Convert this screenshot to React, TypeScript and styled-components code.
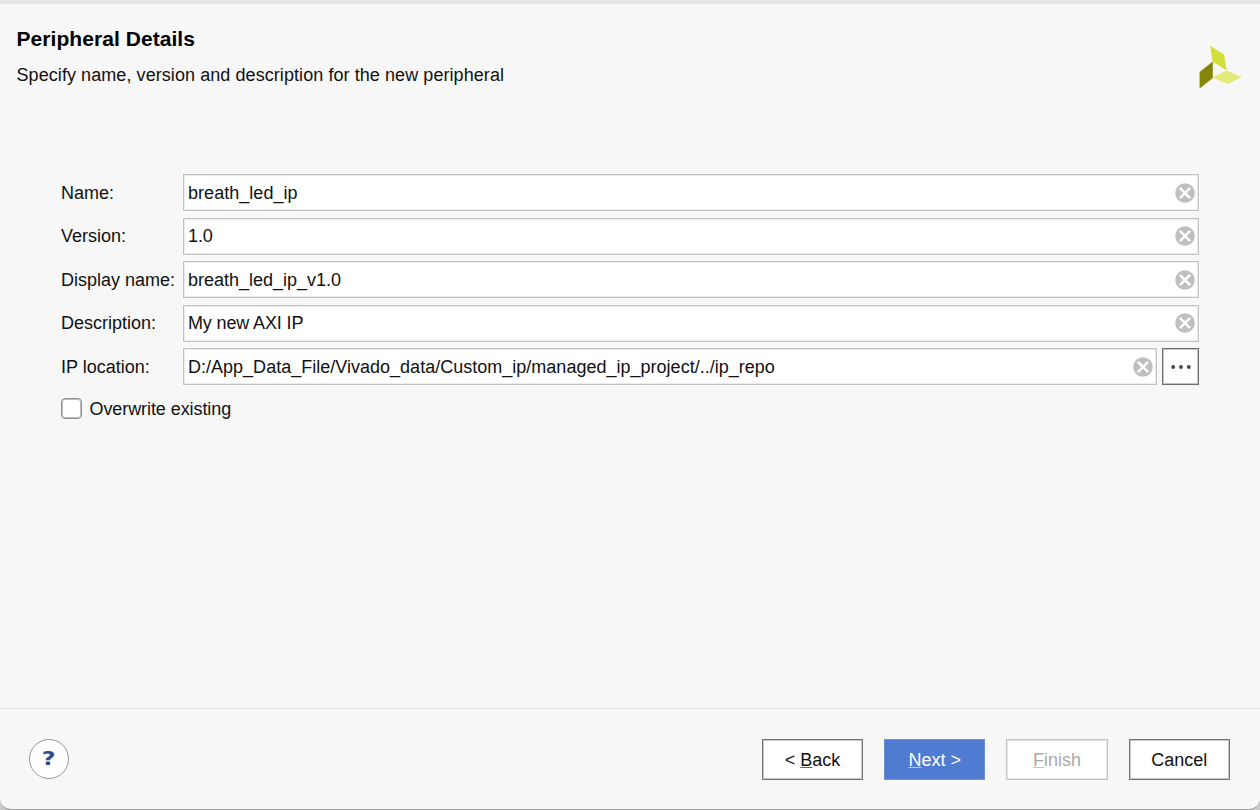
import React from "react";
import styled, { createGlobalStyle } from "styled-components";

const GlobalStyle = createGlobalStyle`
  *, *::before, *::after { box-sizing: border-box; }
  body { margin: 0; background: #c9c9c9; font-family: "Liberation Sans", Arial, sans-serif; color: #111; }
`;

const Dialog = styled.main`
  width: 1260px;
  height: 810px;
  display: flex;
  flex-direction: column;
  overflow: hidden;
  background: #f7f7f7;
  border-top: 4px solid #e6e6e6;
  border-bottom: 1px solid #a3a3a3;
  border-radius: 0 0 11px 11px;
`;

const Header = styled.header`
  height: 170px;
  display: flex;
  justify-content: space-between;
  align-items: flex-start;
  padding: 22px 17px 0 16.5px;
`;

const Title = styled.h1`
  margin: 0;
  font-size: 21px;
  line-height: 26px;
  letter-spacing: 0.06px;
  color: #000;
`;

const Subtitle = styled.p`
  margin: 12px 0 0;
  font-size: 18px;
  line-height: 22px;
  letter-spacing: 0.072px;
`;

const Logo = styled.svg`
  width: 44px;
  height: 44px;
  margin-top: 19px;
`;

const Form = styled.form`
  flex: 1;
  display: flex;
  flex-direction: column;
  gap: 6.5px;
  padding: 0 61px;
`;

const Row = styled.div`
  height: 37px;
  display: flex;
  align-items: center;
`;

const Label = styled.label`
  width: 122px;
  flex: none;
  font-size: 18px;
  line-height: 22px;
  white-space: nowrap;
`;

const Field = styled.div`
  flex: 1;
  height: 37px;
  display: flex;
  align-items: center;
  justify-content: space-between;
  padding: 0 3px 0 4px;
  background: #fff;
  border: 1px solid #c0c0c0;
  box-shadow: inset 0 0 0 1px #ececec, 0 0 0 1px #fcfcfc;
`;

const Value = styled.span<{ $tracking?: number }>`
  font-size: 18px;
  line-height: 22px;
  letter-spacing: ${(p) => p.$tracking ?? 0}px;
  white-space: nowrap;
`;

const ClearIcon = styled.svg`
  width: 20px;
  height: 20px;
  flex: none;
`;

const Browse = styled.button`
  width: 37px;
  height: 37px;
  margin-left: 5px;
  padding: 0;
  display: grid;
  place-items: center;
  background: #fff;
  border: 1px solid #6e6e6e;
  box-shadow: inset 0 0 0 1px #c4c4c4;
`;

const CheckRow = styled.label`
  display: flex;
  align-items: center;
  height: 22px;
  margin-top: 6px;
  gap: 7.5px;
  font-size: 18px;
  line-height: 22px;
  letter-spacing: -0.08px;
`;

const CheckBox = styled.input`
  appearance: none;
  width: 21px;
  height: 21px;
  margin: 0;
  background: #fff;
  border: 1px solid #929292;
  border-radius: 4px;
  box-shadow: inset 0 0 0 1px #bdbdbd;
`;

const Footer = styled.footer`
  height: 101px;
  display: flex;
  align-items: center;
  justify-content: space-between;
  padding: 0 30px 0 29px;
  border-top: 1px solid #e2e2e2;
`;

const Help = styled.button`
  width: 40px;
  height: 40px;
  padding: 0;
  border: 1px solid #969696;
  border-radius: 50%;
  background: #fff;
  color: #2f4d8c;
  font: bold 19.5px/38px "DejaVu Sans", sans-serif;
`;

const HelpMark = styled.span`
  display: inline-block;
  transform: scaleX(1.22);
`;

const Actions = styled.div`
  display: flex;
  gap: 21px;
`;

type Kind = "normal" | "primary" | "disabled";

const palette = {
  normal: { ink: "#111", fill: "#fff", edge: "#727272", inner: "#c8c8c8", line: "#666" },
  primary: { ink: "#fff", fill: "#4f7bd0", edge: "#6e92d8", inner: "#4f7bd0", line: "#b9cbee" },
  disabled: { ink: "#a9a9a9", fill: "#fff", edge: "#c4c4c4", inner: "#e6e6e6", line: "#c4c4c4" },
};

const Mnemonic = styled.span`
  text-decoration: underline;
  text-decoration-thickness: 1px;
  text-underline-offset: 1px;
`;

const Button = styled.button<{ $kind: Kind }>`
  width: 101.3px;
  height: 41px;
  padding: 1px 0 0;
  font: 18px/22px "Liberation Sans", Arial, sans-serif;
  color: ${(p) => palette[p.$kind].ink};
  background: ${(p) => palette[p.$kind].fill};
  border: 1px solid ${(p) => palette[p.$kind].edge};
  box-shadow: inset 0 0 0 1px ${(p) => palette[p.$kind].inner};

  ${Mnemonic} {
    text-decoration-color: ${(p) => palette[p.$kind].line};
  }
`;

const Clear = () => (
  <ClearIcon viewBox="0 0 20 20">
    <circle cx="10" cy="10" r="9.8" fill="#bfbfbf" />
    <path d="M4.9 4.9 15.1 15.1M15.1 4.9 4.9 15.1" stroke="#fff" strokeWidth="2.5" />
  </ClearIcon>
);

const fields = [
  { label: "Name:", value: "breath_led_ip", tracking: 0.04 },
  { label: "Version:", value: "1.0", tracking: -0.1 },
  { label: "Display name:", value: "breath_led_ip_v1.0" },
  { label: "Description:", value: "My new AXI IP", tracking: -0.13 },
  {
    label: "IP location:",
    value: "D:/App_Data_File/Vivado_data/Custom_ip/managed_ip_project/../ip_repo",
    tracking: 0.012,
    browse: true,
  },
];

export default function App() {
  return (
    <>
      <GlobalStyle />
      <Dialog>
        <Header>
          <div>
            <Title>Peripheral Details</Title>
            <Subtitle>Specify name, version and description for the new peripheral</Subtitle>
          </div>
          <Logo viewBox="0 0 44 44">
            <path d="M11 0.8 25.2 9.4 27.6 25.5 13.6 16.4Z" fill="#d3df3c" />
            <path d="M0.6 27 13.8 16.4V33L0.6 43.6Z" fill="#838609" />
            <path d="M13.4 32.4 27.4 25.4 43 32 28.6 39Z" fill="#e2ea79" />
          </Logo>
        </Header>
        <Form>
          {fields.map((f) => (
            <Row key={f.label}>
              <Label>{f.label}</Label>
              <Field>
                <Value $tracking={f.tracking}>{f.value}</Value>
                <Clear />
              </Field>
              {f.browse && (
                <Browse type="button">
                  <svg width="20" height="4" viewBox="0 0 20 4" fill="#444">
                    <circle cx="2.2" cy="2" r="1.9" />
                    <circle cx="10" cy="2" r="1.9" />
                    <circle cx="17.8" cy="2" r="1.9" />
                  </svg>
                </Browse>
              )}
            </Row>
          ))}
          <CheckRow>
            <CheckBox type="checkbox" />
            Overwrite existing
          </CheckRow>
        </Form>
        <Footer>
          <Help><HelpMark>?</HelpMark></Help>
          <Actions>
            <Button $kind="normal">&lt; <Mnemonic>B</Mnemonic>ack</Button>
            <Button $kind="primary"><Mnemonic>N</Mnemonic>ext &gt;</Button>
            <Button $kind="disabled"><Mnemonic>F</Mnemonic>inish</Button>
            <Button $kind="normal">Cancel</Button>
          </Actions>
        </Footer>
      </Dialog>
    </>
  );
}
